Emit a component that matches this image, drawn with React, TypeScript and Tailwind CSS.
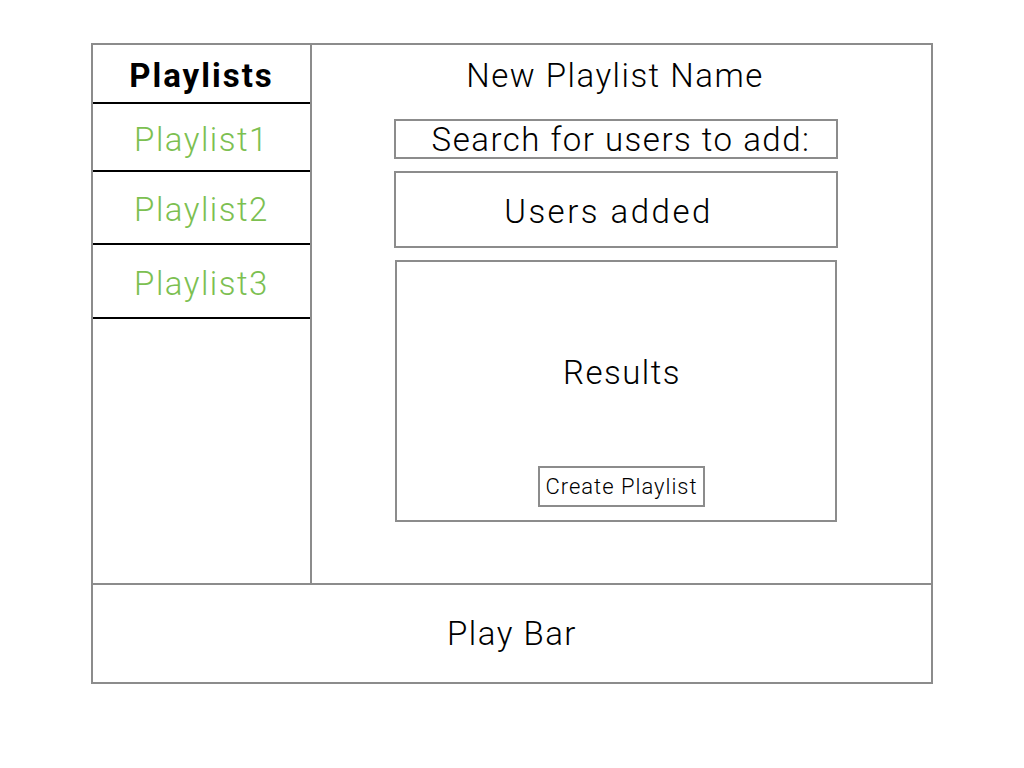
const playlists = [
  { name: 'Playlist1', h: 'h-[68px]' },
  { name: 'Playlist2', h: 'h-[73px]' },
  { name: 'Playlist3', h: 'h-[74px]' },
];

const App = () => {
  return (
    <div
      className="w-full h-[768px] bg-white pt-[43px] pl-[91px] text-black font-light"
      style={{ fontFamily: 'Roboto, "Liberation Sans", sans-serif' }}
    >
      <div className="w-[842px] h-[641px] border-2 border-[#8c8c8c] flex flex-col">
        {/* top section */}
        <div className="h-[540px] flex border-b-2 border-[#8c8c8c]">
          {/* sidebar */}
          <div className="w-[219px] border-r-2 border-[#8c8c8c] flex flex-col">
            <div className="h-[59px] border-b-2 border-black flex items-center justify-center text-[33px] tracking-[2px] font-bold pt-[4px]">
              Playlists
            </div>
            {playlists.map((p) => (
              <div
                key={p.name}
                className={`${p.h} border-b-2 border-black flex items-center justify-center text-[33px] tracking-[1.5px] text-[#7cc051] pt-[5px]`}
              >
                {p.name}
              </div>
            ))}
          </div>

          {/* main */}
          <div className="flex-1 flex flex-col text-[33px] tracking-[1.5px]">
            <div className="h-[60px] flex items-center justify-center pr-[13px] pt-[2px]">
              New Playlist Name
            </div>
            <div className="ml-[82px] mt-[14px] w-[444px] h-[40px] border-2 border-[#8c8c8c] flex items-center justify-center pl-[10px] pt-[1px]">
              Search for users to add:
            </div>
            <div className="ml-[82px] mt-[12px] w-[444px] h-[77px] border-2 border-[#8c8c8c] flex items-center justify-center pr-[15px] pt-[4px] tracking-[2.5px]">
              Users added
            </div>
            <div className="ml-[83px] mt-[12px] w-[442px] h-[262px] border-2 border-[#8c8c8c] flex flex-col items-center">
              <div className="mt-[86px] pl-[12px]">Results</div>
              <button className="mt-[68px] ml-[11px] w-[167px] h-[41px] border-2 border-[#8c8c8c] text-[22px] tracking-[1px] flex items-center justify-center">
                Create Playlist
              </button>
            </div>
          </div>
        </div>

        {/* play bar */}
        <div className="flex-1 flex items-center justify-center text-[33px] tracking-[1.5px]">
          Play Bar
        </div>
      </div>
    </div>
  );
};

export default App;
